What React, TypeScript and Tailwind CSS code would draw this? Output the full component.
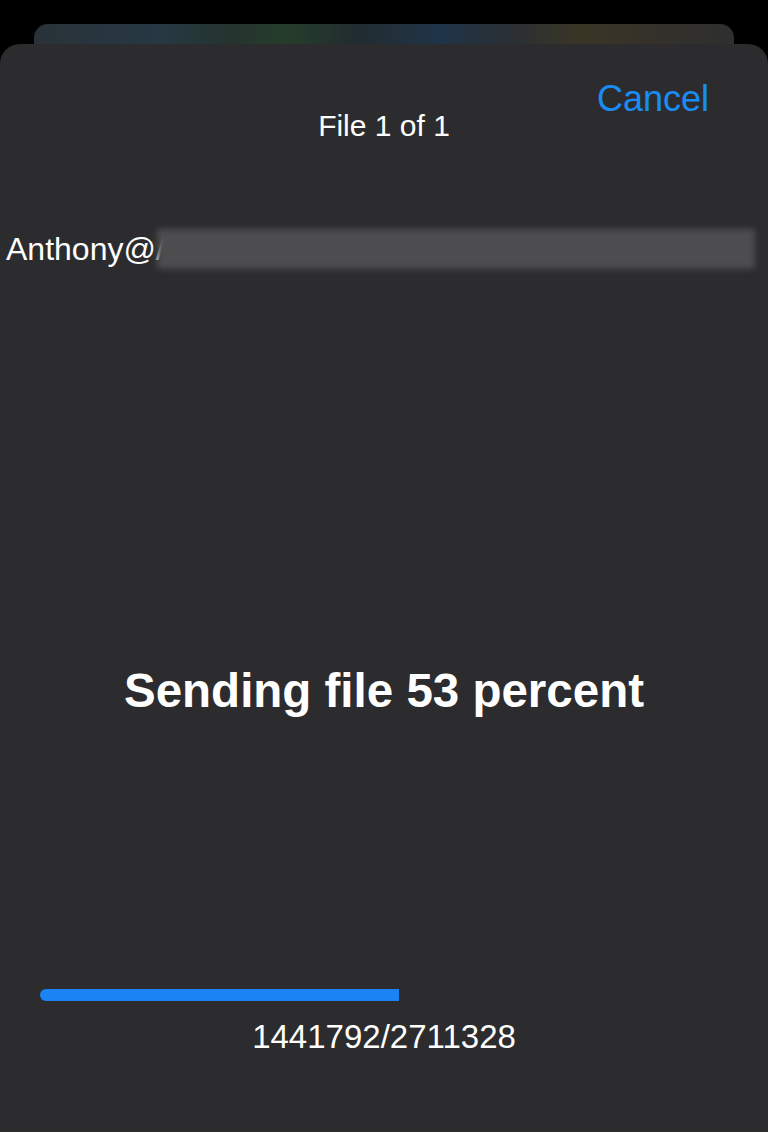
const total = 2711328;
const sent = 1441792;

export default function App() {
  return (
    <div
      className="flex h-[1132px] w-[768px] flex-col overflow-hidden bg-black text-white"
      style={{ fontFamily: '"Liberation Sans", Arial, sans-serif' }}
    >
      {/* card behind the sheet */}
      <div className="mx-[34px] mt-[24px] h-[20px] shrink-0 rounded-t-[14px] bg-[linear-gradient(90deg,#2a3238_0%,#263844_18%,#25342e_28%,#263d2a_36%,#222c30_46%,#1f3448_58%,#2a2f34_68%,#3a3626_78%,#34312a_88%,#2f2f30_100%)]" />

      {/* sheet */}
      <div className="flex flex-1 flex-col rounded-t-[20px] bg-[#2c2c2e]">
        <div className="flex justify-end pr-[59px] pt-[34px]">
          <button className="text-[36px] leading-[42px] text-[#1a8cf5]">Cancel</button>
        </div>
        <div className="-mt-[12px] text-center text-[30px] leading-[36px]">File 1 of 1</div>

        <div className="mt-[85px] flex h-[40px] items-center">
          <span className="pl-[6px] text-[32px] leading-[40px]">Anthony@/</span>
          <div className="-ml-[8px] h-[40px] w-[598px] bg-[#4d4d4f] blur-[3px]" />
        </div>

        <div className="mt-[394px] text-center text-[47.5px] font-bold leading-[56px]">
          Sending file 53 percent
        </div>

        <div className="mt-[270px] px-[40px]">
          <div className="h-[12px] w-[359px] rounded-l-full bg-[#1a84f5]" />
        </div>
        <div className="mt-[16px] text-center text-[33px] leading-[40px]">
          {sent}/{total}
        </div>
      </div>
    </div>
  );
}
